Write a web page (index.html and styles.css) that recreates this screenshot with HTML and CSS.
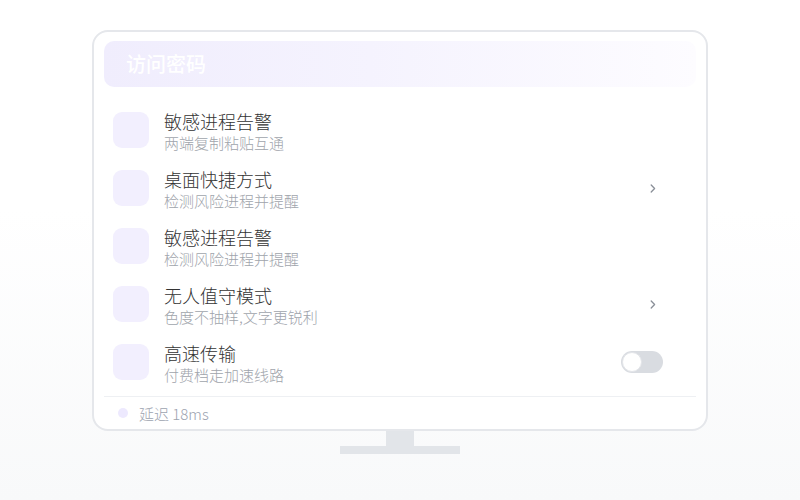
FILE: index.html
```html
<!DOCTYPE html>
<html lang="zh-CN">
<head>
<meta charset="utf-8">
<link rel="stylesheet" href="styles.css">
</head>
<body>
<div class="stage">
  <div class="monitor">
    <div class="header">访问密码</div>
    <div class="list">
      <div class="row">
        <div class="ico"></div>
        <div class="txt"><div class="title">敏感进程告警</div><div class="sub">两端复制粘贴互通</div></div>
      </div>
      <div class="row">
        <div class="ico"></div>
        <div class="txt"><div class="title">桌面快捷方式</div><div class="sub">检测风险进程并提醒</div></div>
        <svg class="chev" width="6" height="9" viewBox="0 0 6 9"><path d="M1.2 1 L4.6 4.5 L1.2 8" fill="none" stroke="#8a8f98" stroke-width="1.3" stroke-linecap="round" stroke-linejoin="round"/></svg>
      </div>
      <div class="row">
        <div class="ico"></div>
        <div class="txt"><div class="title">敏感进程告警</div><div class="sub">检测风险进程并提醒</div></div>
      </div>
      <div class="row">
        <div class="ico"></div>
        <div class="txt"><div class="title">无人值守模式</div><div class="sub">色度不抽样,文字更锐利</div></div>
        <svg class="chev" width="6" height="9" viewBox="0 0 6 9"><path d="M1.2 1 L4.6 4.5 L1.2 8" fill="none" stroke="#8a8f98" stroke-width="1.3" stroke-linecap="round" stroke-linejoin="round"/></svg>
      </div>
      <div class="row">
        <div class="ico"></div>
        <div class="txt"><div class="title">高速传输</div><div class="sub">付费档走加速线路</div></div>
        <div class="toggle"><div class="knob"></div></div>
      </div>
    </div>
    <div class="footer"><span class="dot"></span><span class="lat">延迟 18ms</span></div>
  </div>
  <div class="neck"></div>
  <div class="base"></div>
</div>
</body>
</html>
```
FILE: styles.css
```css
* { box-sizing: border-box; }
html, body { margin: 0; height: 100%; }
body {
  background: linear-gradient(180deg, #ffffff 0%, #ffffff 42%, #f8f9fa 100%);
  font-family: "Noto Sans CJK SC", "Noto Sans", sans-serif;
}
.stage {
  display: flex;
  flex-direction: column;
  align-items: center;
  padding-top: 30px;
}
.monitor {
  width: 616px;
  background: #fff;
  border: 2px solid #e5e7eb;
  border-radius: 16px;
  padding: 9px 10px 0;
}
.header {
  height: 46px;
  border-radius: 10px;
  background: linear-gradient(90deg, #f0edfd 0%, #f5f3fe 45%, #fdfcff 100%);
  color: #fff;
  font-size: 20px;
  font-weight: 500;
  line-height: 46px;
  padding-left: 22px;
}
.list { margin-top: 14px; }
.row {
  display: flex;
  align-items: center;
  height: 58px;
  padding: 0 33px 0 9px;
}
.ico {
  width: 36px;
  height: 36px;
  border-radius: 9px;
  background: #f2effe;
  flex: none;
}
.txt {
  margin-left: 15px;
  padding-top: 2px;
  flex: 1;
}
.title {
  font-size: 18px;
  font-weight: 300;
  line-height: 24px;
  color: #333;
}
.sub {
  font-size: 15px;
  font-weight: 300;
  line-height: 20px;
  color: #a0a4ab;
}
.chev { margin-right: 7px; flex: none; }
.toggle {
  width: 42px;
  height: 22px;
  border-radius: 11px;
  background: #d9dce1;
  padding: 1px;
  flex: none;
}
.knob {
  width: 20px;
  height: 20px;
  border-radius: 50%;
  background: #fff;
  border: 1.5px solid #e3e5e9;
}
.footer {
  margin-top: 5px;
  border-top: 1px solid #eef0f3;
  height: 33px;
  display: flex;
  align-items: center;
  padding-left: 14px;
}
.dot {
  width: 10px;
  height: 10px;
  border-radius: 50%;
  background: #ede9fe;
}
.lat {
  margin-left: 11px;
  font-size: 15px;
  font-weight: 300;
  color: #9ca3af;
}
.neck {
  width: 28px;
  height: 15px;
  background: #e2e5e9;
}
.base {
  width: 120px;
  height: 8px;
  background: #e2e5e9;
}
```
